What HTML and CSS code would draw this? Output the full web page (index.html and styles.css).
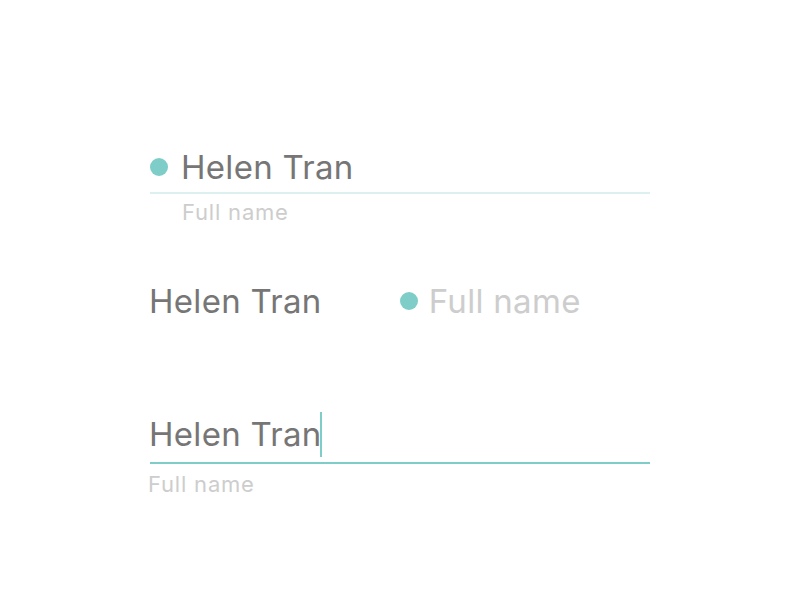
FILE: index.html
```html
<!DOCTYPE html>
<html>
<head>
<meta charset="utf-8">
<link rel="stylesheet" href="styles.css">
</head>
<body>
<main class="page">
  <section class="field field-one">
    <div class="row">
      <span class="dot"></span>
      <span class="value">Helen Tran</span>
    </div>
    <div class="line line-light"></div>
    <div class="label label-indent">Full name</div>
  </section>

  <section class="field field-two">
    <span class="value">Helen Tran</span>
    <div class="inline-label">
      <span class="dot"></span>
      <span class="placeholder">Full name</span>
    </div>
  </section>

  <section class="field field-three">
    <div class="row">
      <span class="value">Helen Tran</span><span class="caret"></span>
    </div>
    <div class="line line-strong"></div>
    <div class="label">Full name</div>
  </section>
</main>
</body>
</html>
```
FILE: styles.css
```css
html, body {
  margin: 0;
  padding: 0;
  background: #ffffff;
}
body {
  font-family: Inter, "Liberation Sans", sans-serif;
  width: 800px;
  height: 600px;
  overflow: hidden;
}
.page {
  display: flex;
  flex-direction: column;
  padding: 147px 0 0 150px;
  width: 500px;
}
.row {
  display: flex;
  align-items: center;
  height: 40px;
}
.dot {
  width: 18px;
  height: 18px;
  border-radius: 50%;
  background: #7fcdc8;
  flex: none;
}
.field-one .dot {
  margin-right: 13px;
  margin-left: 0;
}
.value {
  font-size: 33px;
  color: #767676;
  line-height: 40px;
  letter-spacing: 0.3px;
}
.line {
  width: 500px;
}
.line-light {
  height: 2px;
  background: #dcf1ef;
  margin-top: 5px;
}
.line-strong {
  height: 2px;
  background: #7fcdc8;
  margin-top: 8px;
}
.label {
  font-size: 22px;
  color: #cdcdcd;
  margin-top: 5px;
  line-height: 26px;
  letter-spacing: 0.8px;
}
.label-indent {
  padding-left: 32px;
}
.field-two {
  display: flex;
  align-items: center;
  height: 40px;
  margin-top: 56px;
  margin-left: -1px;
}
.inline-label {
  display: flex;
  align-items: center;
  margin-left: 78px;
}
.field-two .dot {
  margin-right: 11px;
}
.placeholder {
  font-size: 33px;
  color: #cdcdcd;
  line-height: 40px;
  letter-spacing: 0.3px;
}
.field-three {
  margin-top: 93px;
}
.field-three .value {
  margin-left: -1px;
}
.caret {
  width: 2px;
  height: 45px;
  background: #7fcdc8;
  margin-left: -2px;
  flex: none;
}
.field-three .label {
  margin-left: -2px;
  margin-top: 7px;
}
```
